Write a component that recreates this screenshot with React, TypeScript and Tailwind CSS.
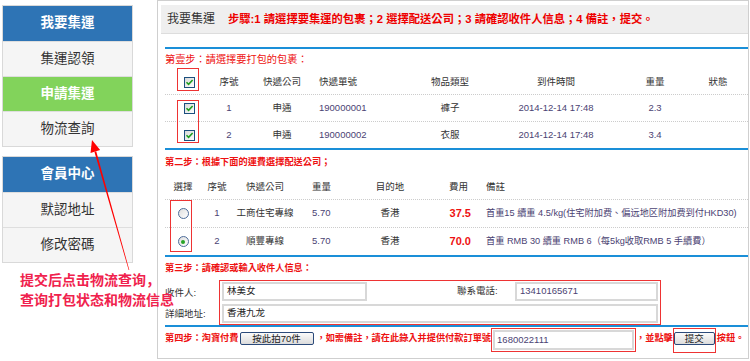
import React from 'react';

const FONT = "font-['Liberation_Sans','Noto_Sans_CJK_TC',sans-serif]";

const PACKAGES = [
  { no: 1, courier: '申通', tracking: '190000001', kind: '褲子', time: '2014-12-14 17:48', weight: '2.3' },
  { no: 2, courier: '申通', tracking: '190000002', kind: '衣服', time: '2014-12-14 17:48', weight: '3.4' },
];

const ROUTES = [
  { no: 1, name: '工商住宅專線', weight: '5.70', dest: '香港', fee: '37.5', note: '首重15 續重 4.5/kg(住宅附加费、偏远地区附加费到付HKD30)', on: false },
  { no: 2, name: '順豐專線', weight: '5.70', dest: '香港', fee: '70.0', note: '首重 RMB 30 續重 RMB 6（每5kg收取RMB 5 手續費）', on: true },
];

const Check = () => (
  <span className="inline-flex w-[11px] h-[11px] items-center justify-center border border-[#1c4f7e] bg-gradient-to-br from-[#d8d8d8] to-white">
    <svg width="9" height="9" viewBox="0 0 9 9">
      <path d="M1.5 4.3 L3.6 6.4 L7.6 2" fill="none" stroke="#1e9e1e" strokeWidth="1.6" />
    </svg>
  </span>
);

const Radio = ({ on }: { on: boolean }) => (
  <span className="inline-flex w-[11px] h-[11px] rounded-full border border-[#4d6c9a] bg-gradient-to-br from-[#dedede] to-white items-center justify-center">
    {on && <span className="w-[4px] h-[4px] rounded-full bg-[#27a327]" />}
  </span>
);

const SideBox = ({ title, items, active }: { title: string; items: string[]; active?: string }) => (
  <div className="border border-[#d9d9d9] bg-[#f5f5f5]">
    <div className="h-[35px] bg-[#2e74b5] text-white text-[13.5px] font-bold flex items-center justify-center">{title}</div>
    {items.map(item => (
      <div
        key={item}
        className={`h-[35px] border-t border-[#dedede] text-[13.5px] flex items-center justify-center ${
          item === active ? 'bg-[#82d35b] text-white font-bold' : 'text-[#333]'
        }`}
      >
        {item}
      </div>
    ))}
  </div>
);

export default function App() {
  return (
    <div className={`relative w-[750px] h-[361px] bg-white overflow-hidden ${FONT}`}>
      <div className="flex items-start">
        {/* Sidebar */}
        <aside className="w-[131px] ml-[2px] mt-[5px] flex flex-col gap-[9px]">
          <SideBox title="我要集運" items={['集運認領', '申請集運', '物流查詢']} active="申請集運" />
          <SideBox title="會員中心" items={['默認地址', '修改密碼']} />
        </aside>

        {/* Main panel */}
        <main className="ml-[24px] w-[592px] h-[359px] border border-[#cfcfcf] pl-[3px] pt-[4px]">
          <div className="h-[29px] bg-[#efefef] border-b border-[#dddddd] flex items-center">
            <span className="ml-[6px] text-[12px] text-[#333]">我要集運</span>
            <span className="ml-[13px] text-[11.3px] font-bold text-[#ee0000]">
              步驟:1 請選擇要集運的包裹；2 選擇配送公司；3 請確認收件人信息；4 備註，提交。
            </span>
          </div>

          <div className="pl-[4px] mt-[13px]">
            {/* Step 1 */}
            <section className="border-t-2 border-[#1a8fd8]">
              <div className="h-[22px] flex items-center text-[10.2px] text-[#ee1111]">第壹步：請選擇要打包的包裹：</div>
              <div className="grid grid-cols-[48px_32px_74px_81px_100px_112px_86px_40px] h-[24px] items-center text-[9.5px] text-[#333] border-b border-dotted border-[#cccccc]">
                <div className="flex justify-center"><Check /></div>
                <div className="text-center">序號</div>
                <div className="text-center">快遞公司</div>
                <div>快遞單號</div>
                <div className="text-center">物品類型</div>
                <div className="text-center">到件時間</div>
                <div className="text-center">重量</div>
                <div className="text-center">狀態</div>
              </div>
              {PACKAGES.map((p, i) => (
                <div
                  key={p.no}
                  className={`grid grid-cols-[48px_32px_74px_81px_100px_112px_86px_40px] items-center text-[9.5px] ${
                    i === 0 ? 'h-[27px] border-b border-dotted border-[#cccccc]' : 'h-[26px]'
                  }`}
                >
                  <div className="flex justify-center"><Check /></div>
                  <div className="text-center text-[#4b4373]">{p.no}</div>
                  <div className="text-center text-[#333]">{p.courier}</div>
                  <div className="text-[#4b4373]">{p.tracking}</div>
                  <div className="text-center text-[#333]">{p.kind}</div>
                  <div className="text-center text-[#4b4373]">{p.time}</div>
                  <div className="text-center text-[#4b4373]">{p.weight}</div>
                  <div />
                </div>
              ))}
            </section>

            {/* Step 2 */}
            <section className="border-t-2 border-[#1a8fd8]">
              <div className="h-[25px] flex items-center text-[9.2px] font-bold text-[#ee1111]">第二步：根據下面的運費選擇配送公司；</div>
              <div className="grid grid-cols-[36px_32px_64px_63px_60px_66px_1fr] h-[25px] items-center text-[9.5px] text-[#333] border-b border-dotted border-[#cccccc]">
                <div className="text-center">選擇</div>
                <div className="text-center">序號</div>
                <div className="text-center">快遞公司</div>
                <div className="pl-[15px]">重量</div>
                <div className="text-center">目的地</div>
                <div className="text-right pr-[18px]">費用</div>
                <div>備註</div>
              </div>
              {ROUTES.map((r, i) => (
                <div
                  key={r.no}
                  className={`grid grid-cols-[36px_32px_64px_63px_60px_66px_1fr] items-center text-[9.5px] ${
                    i === 0 ? 'h-[28px] border-b border-dotted border-[#cccccc]' : 'h-[27px]'
                  }`}
                >
                  <div className="flex justify-center"><Radio on={r.on} /></div>
                  <div className="text-center text-[#4b4373]">{r.no}</div>
                  <div className="text-center text-[#333] whitespace-nowrap">{r.name}</div>
                  <div className="pl-[15px] text-[#4b4373]">{r.weight}</div>
                  <div className="text-center text-[#333]">{r.dest}</div>
                  <div className="text-right pr-[15px] text-[11px] font-bold text-[#ee1111]">{r.fee}</div>
                  <div className="text-[9.2px] text-[#4b4373] whitespace-nowrap">{r.note}</div>
                </div>
              ))}
            </section>

            {/* Step 3 */}
            <section className="border-t-2 border-[#1a8fd8]">
              <div className="h-[23px] flex items-center text-[9.2px] font-bold text-[#ee1111]">第三步：請確認或輸入收件人信息：</div>
              <div className="flex h-[45px]">
                <div className="w-[54px] flex flex-col justify-around text-[9.5px] text-[#333] pt-[2px]">
                  <div>收件人:</div>
                  <div>詳細地址:</div>
                </div>
                <div className="w-[442px] border border-[#ee3333] px-[2px] py-[1px] flex flex-col gap-[3px]">
                  <div className="grid grid-cols-[145px_1fr_58px_143px] items-center">
                    <div className="h-[19px] border-2 border-[#d8d8d8] px-[3px] text-[9.5px] text-[#222] leading-[13px]">林美女</div>
                    <div />
                    <div className="text-[9.5px] text-[#333]">聯系電話:</div>
                    <div className="h-[19px] border-2 border-[#d8d8d8] px-[3px] text-[9.5px] text-[#4b4373] leading-[13px]">13410165671</div>
                  </div>
                  <div className="h-[19px] border-2 border-[#d8d8d8] px-[3px] text-[9.5px] text-[#222] leading-[13px]">香港九龙</div>
                </div>
              </div>
            </section>

            {/* Step 4 */}
            <section className="border-t-2 border-[#1a8fd8] h-[30px] flex items-start text-[9.2px] font-bold text-[#ee1111] whitespace-nowrap">
              <span className="mt-[4px] leading-[14px]">第四步：淘寶付費</span>
              <button className="mt-[5px] ml-[1px] w-[74px] h-[13px] rounded-[2px] border border-[#2b4a7a] bg-gradient-to-b from-[#fbfbfb] to-[#dcdcdc] text-[9.5px] font-normal text-[#222] leading-[11px]">
                按此拍70件
              </button>
              <span className="mt-[4px] ml-[3px] leading-[14px]">，如需備註，請在此錄入并提供付款訂單號</span>
              <div className="mt-[1px] w-[145px] h-[24px] border border-[#ee3333] p-[1px]">
                <div className="h-full border-2 border-[#d8d8d8] px-[2px] text-[9.5px] font-normal text-[#4b4373] leading-[15px]">1680022111</div>
              </div>
              <span className="mt-[4px] leading-[14px]">，並點擊</span>
              <div className="mt-[1px] w-[43px] h-[25px] border border-[#ee3333] pt-[3px]">
                <button className="w-full h-[13px] rounded-[2px] border border-[#2b4a7a] bg-gradient-to-b from-[#fbfbfb] to-[#dcdcdc] text-[9.5px] font-normal text-[#222] leading-[11px]">
                  提交
                </button>
              </div>
              <span className="mt-[4px] ml-[1px] leading-[14px]">按鈕。</span>
            </section>
          </div>
        </main>
      </div>

      {/* Annotation boxes */}
      <div className="absolute left-[177px] top-[68px] w-[22px] h-[23px] border border-[#ee3333]" />
      <div className="absolute left-[177px] top-[100px] w-[22px] h-[43px] border border-[#ee3333]" />
      <div className="absolute left-[170px] top-[200px] w-[22px] h-[52px] border border-[#ee3333]" />

      {/* Annotation arrow */}
      <svg className="absolute left-0 top-0 pointer-events-none" width="160" height="300" viewBox="0 0 160 300">
        <polygon points="92,140 100.1,150.1 90.5,152.9" fill="#ff0000" />
        <polygon points="96.2,151.2 129.3,269.9 128.7,270.1 94.4,151.8" fill="#ff0000" />
      </svg>

      <div className="absolute left-[20px] top-[270px] text-[14px] leading-[20px] font-bold text-[#f0224d] font-['Liberation_Sans','Noto_Sans_CJK_SC',sans-serif] whitespace-nowrap">
        <div>提交后点击物流查询，</div>
        <div>查询打包状态和物流信息</div>
      </div>
    </div>
  );
}
